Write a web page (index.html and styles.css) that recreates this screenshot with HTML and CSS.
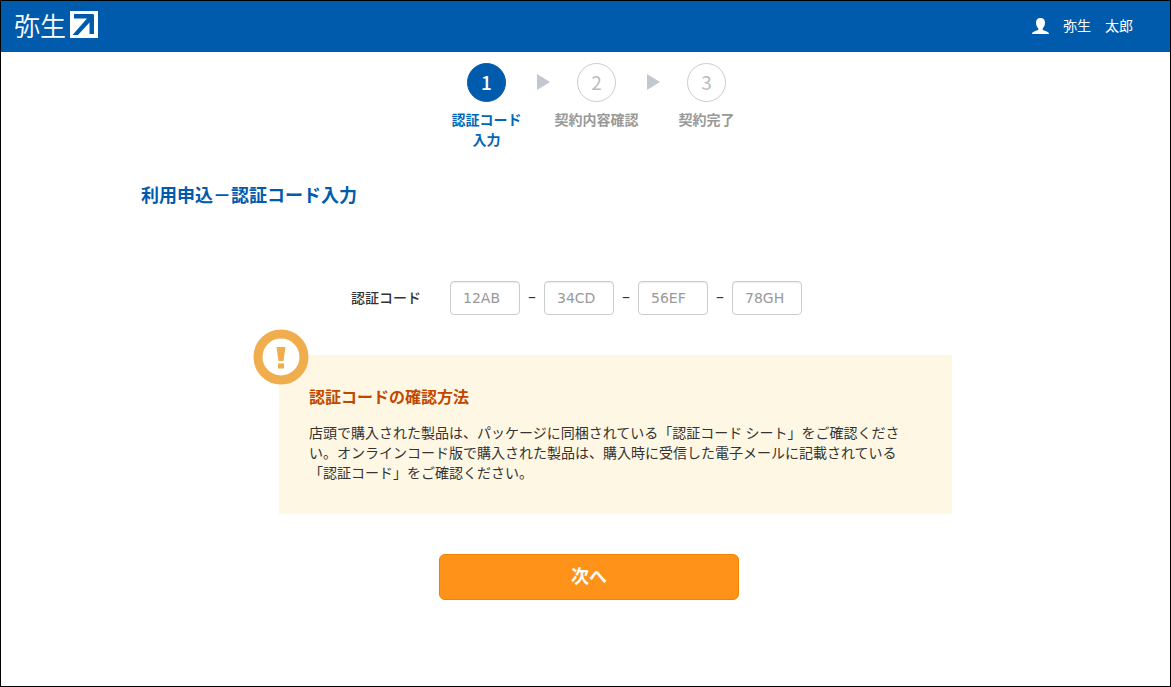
FILE: index.html
```
<!DOCTYPE html>
<html lang="ja">
<head>
<meta charset="utf-8">
<title>利用申込－認証コード入力</title>
<link rel="stylesheet" href="styles.css">
</head>
<body>
<header class="header">
  <a class="logo" href="#">
    <span>弥生</span>
    <svg class="logo-mark" viewBox="0 0 28 27" aria-hidden="true">
      <path fill="#fff" d="M0 0h28v27H0z"/>
      <path fill="#005bac" d="M4 3h19l1 1v19h-4.500V11.500L8 24H2.500L17 7.500H4z"/>
    </svg>
  </a>
  <div class="user">
    <svg class="user-icon" viewBox="0 0 17 16" aria-hidden="true">
      <path fill="#fff" d="M8.500 0C5.500 0 4 1.800 4 4.500c0 2.600.8 4.500 2.300 5.800v1.400C5.600 12.700 0 13 0 16h17c0-3-5.600-3.300-6.300-4.300v-1.400C12.200 9 13 7.100 13 4.500 13 1.800 11.500 0 8.500 0z"/>
    </svg>
    <span>弥生　太郎</span>
  </div>
</header>
<main class="main">
  <ol class="steps">
    <li class="step step-current" aria-current="step"><span class="step-number">1</span><span class="step-label">認証コード入力</span></li>
    <li class="step"><span class="step-number">2</span><span class="step-label">契約内容確認</span></li>
    <li class="step"><span class="step-number">3</span><span class="step-label">契約完了</span></li>
  </ol>
  <h1 class="title">利用申込－認証コード入力</h1>
  <form class="form">
    <div class="code-row">
      <label class="code-label" for="code1">認証コード</label>
      <div class="code-fields">
        <input class="code-input" id="code1" type="text" maxlength="4" placeholder="12AB" aria-label="認証コード 1">
        <span class="dash">–</span>
        <input class="code-input" type="text" maxlength="4" placeholder="34CD" aria-label="認証コード 2">
        <span class="dash">–</span>
        <input class="code-input" type="text" maxlength="4" placeholder="56EF" aria-label="認証コード 3">
        <span class="dash">–</span>
        <input class="code-input" type="text" maxlength="4" placeholder="78GH" aria-label="認証コード 4">
      </div>
    </div>
    <section class="notice">
      <svg class="notice-icon" viewBox="0 0 56 56" aria-hidden="true">
        <circle cx="28" cy="28" r="23" fill="#fff" stroke="#f0ad4e" stroke-width="9"/>
        <path fill="#f0ad4e" d="M23.500 18h9l-2 14h-5zM25 34.500h6v5h-6z"/>
      </svg>
      <h2 class="notice-title">認証コードの確認方法</h2>
      <p class="notice-text">店頭で購入された製品は、パッケージに同梱されている「認証コード シート」をご確認ください。オンラインコード版で購入された製品は、購入時に受信した電子メールに記載されている「認証コード」をご確認ください。</p>
    </section>
    <button class="next" type="submit">次へ</button>
  </form>
</main>
</body>
</html>
```
FILE: styles.css
```
* { box-sizing: border-box; }

body {
  margin: 0;
  min-height: 100vh;
  border: 1px solid #000;
  background: #fff;
  color: #333;
  font: 14px/20px "Noto Sans CJK JP", sans-serif;
}

.header {
  display: flex;
  align-items: center;
  justify-content: space-between;
  height: 51px;
  padding: 0 37px 4px 13px;
  background: #005bac;
  color: #fff;
}

.logo {
  display: flex;
  align-items: center;
  gap: 4px;
  color: #fff;
  font-size: 26px;
  font-weight: 350;
  line-height: 34px;
  text-decoration: none;
}

.logo-mark { width: 28px; height: 27px; }

.user { display: flex; align-items: center; gap: 14px; }

.user-icon { width: 17px; height: 16px; margin-top: 2px; }

.main {
  max-width: 889px;
  margin: 0 auto;
  padding: 11px 0 86px;
}

.steps {
  display: flex;
  justify-content: center;
  gap: 20px;
  min-height: 88px;
  margin: 0;
  padding: 0 0 0 22px;
  list-style: none;
}

.step {
  position: relative;
  display: flex;
  flex-direction: column;
  align-items: center;
  gap: 7px;
  width: 90px;
  color: #999;
  font-weight: 700;
  text-align: center;
}

.step + .step::before {
  content: "";
  position: absolute;
  top: 11px;
  left: -15px;
  border-left: 13px solid #c3c8d0;
  border-top: 8px solid transparent;
  border-bottom: 8px solid transparent;
}

.step-number {
  width: 39px;
  height: 39px;
  border: 1px solid #ccc;
  border-radius: 50%;
  color: #bbb;
  font-size: 19px;
  font-weight: 400;
  line-height: 36px;
}

.step-label { max-width: 84px; }

.step-current { color: #0068b7; }
.step-current .step-label { width: 72px; }

.step-current .step-number {
  border-color: #005bac;
  background: #005bac;
  color: #fff;
  font-weight: 500;
}

.title {
  margin: 30px 0 0;
  color: #005bac;
  font-size: 18px;
  line-height: 26px;
}

.code-row {
  display: flex;
  align-items: center;
  gap: 29px;
  margin-top: 74px;
  padding-left: 210px;
}

.code-label { padding-bottom: 3px; font-weight: 500; }

.code-fields { display: flex; align-items: center; }

.dash {
  width: 24px;
  padding-bottom: 2px;
  font-family: "DejaVu Sans", sans-serif;
  font-size: 16px;
  text-align: center;
}

.code-input {
  width: 70px;
  height: 34px;
  padding: 6px 12px;
  border: 1px solid #ccc;
  border-radius: 4px;
  box-shadow: inset 0 1px 1px rgba(0, 0, 0, .075);
  color: #555;
  font: 14px/20px "DejaVu Sans", sans-serif;
}

.code-input::placeholder { color: #999; opacity: 1; }

.notice {
  position: relative;
  max-width: 673px;
  margin: 40px 0 0 138px;
  padding: 29px 30px 32px;
  background: #fef7e4;
}

.notice-icon {
  position: absolute;
  top: -26px;
  left: -26px;
  width: 56px;
  height: 56px;
}

.notice-title {
  margin: 0 0 14px;
  color: #c14700;
  font-size: 16px;
  line-height: 24px;
}

.notice-text { margin: 0; }

.next {
  display: block;
  width: 300px;
  height: 46px;
  margin: 40px 0 0 298px;
  padding: 0 0 5px;
  border: 1px solid #f08300;
  border-radius: 6px;
  background: #ff9218;
  color: #fff;
  font: 700 18px/24px "Noto Sans CJK JP", sans-serif;
}
```
